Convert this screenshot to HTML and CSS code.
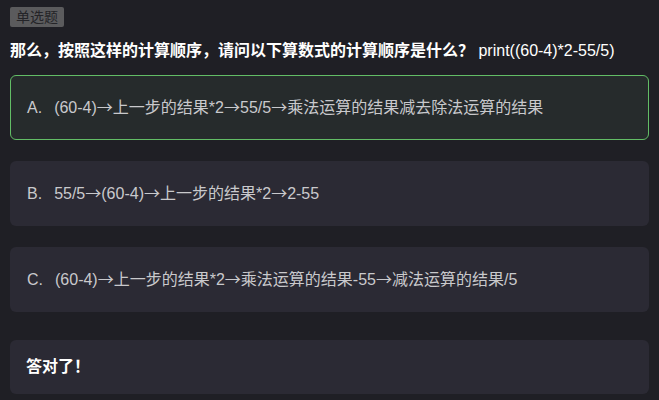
FILE: index.html
```html
<!DOCTYPE html>
<html lang="zh-CN">
<head>
    <meta charset="UTF-8">
    <meta name="viewport" content="width=device-width, initial-scale=1.0">
    <title>单选题</title>
    <link rel="stylesheet" href="styles.css">
</head>
<body>

    <div class="quiz">
        <span class="tag">单选题</span>
        <p class="question">那么，按照这样的计算顺序，请问以下算数式的计算顺序是什么？ <span class="code">print((60-4)*2-55/5)</span></p>

        <ul class="options">
            <li class="option correct"><span class="letter">A.</span>(60-4)<span class="arrow">→</span>上一步的结果*2<span class="arrow">→</span>55/5<span class="arrow">→</span>乘法运算的结果减去除法运算的结果</li>
            <li class="option"><span class="letter">B.</span>55/5<span class="arrow">→</span>(60-4)<span class="arrow">→</span>上一步的结果*2<span class="arrow">→</span>2-55</li>
            <li class="option"><span class="letter">C.</span>(60-4)<span class="arrow">→</span>上一步的结果*2<span class="arrow">→</span>乘法运算的结果-55<span class="arrow">→</span>减法运算的结果/5</li>
        </ul>

        <div class="result">答对了！</div>
    </div>

</body>
</html>
```

FILE: styles.css
```css
body {
    font-family: "Liberation Sans", "Noto Sans CJK SC", sans-serif;
    background-color: #1f1f25; /* dark page */
    color: #e6e6e6;
    margin: 0;
    padding: 0;
}
.quiz {
    padding: 7px 10px 0;
}
.tag {
    display: inline-block;
    background-color: #5b5b5d;
    color: #242428;
    font-size: 14px;
    line-height: 20px;
    padding: 0 6px;
    border-radius: 2px;
}
.question {
    margin: 12px 0 12px;
    font-size: 16px;
    line-height: 24px;
    font-weight: bold;
    color: #ffffff;
}
.question .code {
    font-weight: normal;
}
.options {
    list-style-type: none;
    padding: 0;
    margin: 0;
}
.option {
    background-color: #2b2a34;
    border: 1px solid transparent;
    border-radius: 6px;
    padding: 21px 16px;
    font-size: 16px;
    line-height: 21px;
    color: #c9c9cc;
    margin-bottom: 21px;
}
.option.correct {
    background-color: #262b2c;
    border-color: #62bd66; /* green for the right answer */
}
.letter {
    margin-right: 12px;
}
.arrow {
    font-family: "Noto Sans CJK SC", sans-serif;
    line-height: 0;
}
.result {
    margin-top: 28px;
    background-color: #2b2a34;
    border-radius: 6px;
    padding: 16px;
    font-size: 16px;
    line-height: 22px;
    font-weight: bold;
    color: #ffffff;
}
```
